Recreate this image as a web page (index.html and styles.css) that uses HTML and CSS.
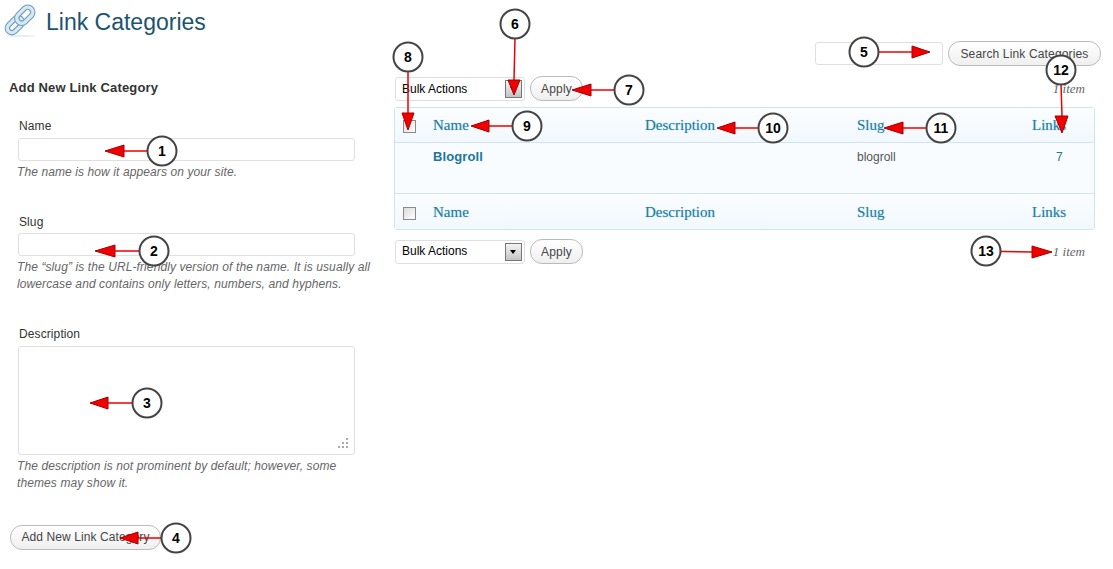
FILE: index.html
```html
<!DOCTYPE html>
<html lang="en">
<head>
    <meta charset="UTF-8">
    <meta name="viewport" content="width=device-width, initial-scale=1.0">
    <title>Link Categories</title>
    <link rel="stylesheet" href="styles.css">
</head>
<body>
    <div class="wrap">
        <div class="page-title">
            <svg class="title-icon" width="34" height="34" viewBox="0 0 34 34">
                <ellipse cx="18" cy="33" rx="15" ry="1" fill="#e3eff5"/>
                <g fill="none" transform="rotate(-45 17 17)">
                    <rect x="1" y="12.500" width="17.500" height="9" rx="4.500" stroke="#6d9fbb" stroke-width="5.500"/>
                    <rect x="1" y="12.500" width="17.500" height="9" rx="4.500" stroke="#d8e8f1" stroke-width="3.300"/>
                    <rect x="14.500" y="12" width="18.500" height="10" rx="5" stroke="#6d9fbb" stroke-width="5.500"/>
                    <rect x="14.500" y="12" width="18.500" height="10" rx="5" stroke="#d8e8f1" stroke-width="3.300"/>
                </g>
            </svg>
            <h1>Link Categories</h1>
        </div>

        <div class="columns">
            <form class="col-left">
                <h3>Add New Link Category</h3>
                <div class="field field-name">
                    <label>Name</label>
                    <input type="text" class="text-input">
                    <p>The name is how it appears on your site.</p>
                </div>
                <div class="field field-slug">
                    <label>Slug</label>
                    <input type="text" class="text-input">
                    <p>The “slug” is the URL-friendly version of the name. It is usually all lowercase and contains only letters, numbers, and hyphens.</p>
                </div>
                <div class="field field-desc">
                    <label>Description</label>
                    <div class="text-area">
                        <svg class="grip" width="11" height="11" viewBox="0 0 11 11" fill="#a9a9a9">
                            <rect x="8" y="0" width="2" height="2"/>
                            <rect x="4" y="4" width="2" height="2"/>
                            <rect x="8" y="4" width="2" height="2"/>
                            <rect x="0" y="8" width="2" height="2"/>
                            <rect x="4" y="8" width="2" height="2"/>
                            <rect x="8" y="8" width="2" height="2"/>
                        </svg>
                    </div>
                    <p>The description is not prominent by default; however, some themes may show it.</p>
                </div>
                <button type="button" class="btn btn-add">Add New Link Category</button>
            </form>

            <div class="col-right">
                <div class="search-row">
                    <input type="text" class="text-input search-input">
                    <button type="button" class="btn btn-search">Search Link Categories</button>
                </div>
                <div class="tablenav tablenav-top">
                    <div class="select-box">Bulk Actions<span class="select-arrow"></span></div>
                    <button type="button" class="btn btn-apply">Apply</button>
                    <span class="count">1 item</span>
                </div>
                <table class="cat-table">
                    <thead>
                        <tr>
                            <th class="check-col"><span class="check"></span></th>
                            <th class="name-col">Name</th>
                            <th class="desc-col">Description</th>
                            <th class="slug-col">Slug</th>
                            <th>Links</th>
                        </tr>
                    </thead>
                    <tbody>
                        <tr>
                            <td></td>
                            <td class="cat-name">Blogroll</td>
                            <td></td>
                            <td class="cat-slug">blogroll</td>
                            <td class="cat-links">7</td>
                        </tr>
                    </tbody>
                    <tfoot>
                        <tr>
                            <th class="check-col"><span class="check"></span></th>
                            <th>Name</th>
                            <th>Description</th>
                            <th>Slug</th>
                            <th>Links</th>
                        </tr>
                    </tfoot>
                </table>
                <div class="tablenav tablenav-bottom">
                    <div class="select-box">Bulk Actions<span class="select-arrow"></span></div>
                    <button type="button" class="btn btn-apply">Apply</button>
                    <span class="count">1 item</span>
                </div>
            </div>
        </div>
    </div>

    <!-- numbered callouts drawn over the screen -->
    <svg class="callouts" width="1113" height="569" viewBox="0 0 1113 569">
        <g class="arrows">
            <path d="M147 151H124M148 251H115M133 403H108M162 538H138M878 52H912M515 38L514 80M615 90H591M408 71V113M513 126H489M759 128H735M927 128H903M1061 84L1062 116M972 251L1032 252"/>
            <polygon points="105,151 124,145 124,157"/>
            <polygon points="95,251 115,245 115,257"/>
            <polygon points="90,403 108,397 108,409"/>
            <polygon points="120,538 138,532 138,544"/>
            <polygon points="930,52 912,46 912,58"/>
            <polygon points="514,95 508,80 520,80"/>
            <polygon points="572,90 591,84 591,96"/>
            <polygon points="408,130 402,113 414,113"/>
            <polygon points="471,126 489,120 489,132"/>
            <polygon points="717,128 735,122 735,134"/>
            <polygon points="884,128 903,122 903,134"/>
            <polygon points="1062,133 1055,116 1068,116"/>
            <polygon points="1052,252 1032,246 1032,258"/>
        </g>
        <g class="dots">
            <circle cx="162" cy="151" r="14.500"/>
            <circle cx="154" cy="251" r="14.500"/>
            <circle cx="147" cy="403" r="14.500"/>
            <circle cx="176" cy="538" r="14.500"/>
            <circle cx="864" cy="52" r="14.500"/>
            <circle cx="515" cy="24" r="14.500"/>
            <circle cx="629" cy="90" r="14.500"/>
            <circle cx="408" cy="57" r="14.500"/>
            <circle cx="527" cy="126" r="14.500"/>
            <circle cx="773" cy="128" r="14.500"/>
            <circle cx="941" cy="128" r="14.500"/>
            <circle cx="1061" cy="70" r="14.500"/>
            <circle cx="986" cy="251" r="14.500"/>
        </g>
        <g class="nums">
            <text x="162" y="156">1</text>
            <text x="154" y="256">2</text>
            <text x="147" y="408">3</text>
            <text x="176" y="543">4</text>
            <text x="864" y="57">5</text>
            <text x="515" y="29">6</text>
            <text x="629" y="95">7</text>
            <text x="408" y="62">8</text>
            <text x="527" y="131">9</text>
            <text x="773" y="133">10</text>
            <text x="941" y="133">11</text>
            <text x="1061" y="75">12</text>
            <text x="986" y="256">13</text>
        </g>
    </svg>
</body>
</html>
```

FILE: styles.css
```css
html, body {
    margin: 0;
    padding: 0;
    height: 569px;
    overflow: hidden;
    background-color: #ffffff;
}

body {
    font-family: 'Liberation Sans', Arial, sans-serif;
    font-size: 12px;
    color: #333333;
    position: relative;
}

.page-title {
    display: flex;
    align-items: flex-start;
    height: 41px;
    padding-left: 3px;
}

.title-icon {
    margin-top: 3px;
    margin-right: 9px;
}

h1 {
    margin: 8px 0 0;
    font-size: 23px;
    line-height: 28px;
    font-weight: normal;
    color: #1c5470;
}

.columns {
    display: flex;
    padding-left: 9px;
}

/* left form */
.col-left {
    width: 361px;
    margin-right: 24px;
}

h3 {
    margin: 39px 0 0;
    font-size: 13px;
    line-height: 16px;
    font-weight: bold;
    letter-spacing: 0.15px;
    color: #333333;
}

.field {
    padding-left: 9px;
    width: 337px;
}

.field-name {
    margin-top: 23px;
}

.field-slug {
    margin-top: 33px;
}

.field-desc {
    margin-top: 33px;
}

label {
    display: block;
    padding-left: 1px;
    font-size: 12px;
    line-height: 14px;
    height: 19px;
    letter-spacing: 0.1px;
    color: #333333;
}

.field-slug label,
.field-desc label {
    line-height: 16px;
}

.field-desc label {
    height: 20px;
}

.field p {
    width: 356px;
    margin: 3px 0 0 -1px;
    font-size: 12px;
    line-height: 17px;
    font-style: italic;
    letter-spacing: 0.1px;
    color: #666666;
}

.text-input {
    display: block;
    box-sizing: border-box;
    width: 337px;
    height: 23px;
    margin: 0;
    padding: 0 4px;
    background-color: #ffffff;
    border: 1px solid #dfdfdf;
    border-radius: 3px;
}

.text-area {
    position: relative;
    box-sizing: border-box;
    width: 337px;
    height: 109px;
    background-color: #ffffff;
    border: 1px solid #dfdfdf;
    border-radius: 3px;
}

.grip {
    position: absolute;
    right: 5px;
    bottom: 5px;
}

.btn {
    display: block;
    box-sizing: border-box;
    margin: 0;
    padding: 0;
    height: 25px;
    font-family: 'Liberation Sans', Arial, sans-serif;
    font-size: 12px;
    letter-spacing: 0.15px;
    color: #464646;
    background: linear-gradient(to bottom, #ffffff, #efefef);
    border: 1px solid #bbbbbb;
    border-radius: 12px;
}

.btn-add {
    width: 151px;
    margin-top: 33px;
    margin-left: 1px;
    padding-bottom: 2px;
    letter-spacing: 0.1px;
}

/* right side */
.col-right {
    width: 707px;
}

.search-row {
    display: flex;
    align-items: center;
    height: 25px;
}

.search-input {
    width: 128px;
    margin-left: 421px;
    margin-right: 5px;
}

.btn-search {
    width: 153px;
}

.tablenav {
    display: flex;
    align-items: center;
    width: 690px;
    padding-left: 1px;
}

.tablenav-top {
    margin-top: 10px;
}

.tablenav-bottom {
    margin-top: 9px;
}

.select-box {
    position: relative;
    box-sizing: border-box;
    width: 130px;
    height: 24px;
    margin-right: 5px;
    padding-left: 6px;
    font-size: 12px;
    line-height: 22px;
    color: #000000;
    background-color: #ffffff;
    border: 1px solid #dfdfdf;
    border-radius: 3px;
}

.tablenav-bottom .select-box {
    line-height: 20px;
}

.select-arrow {
    position: absolute;
    top: 2px;
    right: 2px;
    box-sizing: border-box;
    width: 17px;
    height: 18px;
    background: linear-gradient(to bottom, #f4f4f4, #c4c4c4);
    border: 1px solid #777777;
}

.select-arrow::after {
    content: '';
    position: absolute;
    top: 6px;
    left: 4px;
    border-style: solid;
    border-width: 4px 3.500px 0;
    border-color: #000000 transparent transparent;
}

.btn-apply {
    width: 53px;
}

.count {
    margin-left: auto;
    font-family: 'Liberation Serif', Georgia, serif;
    font-size: 13px;
    font-style: italic;
    color: #666666;
}

.cat-table {
    width: 701px;
    margin-top: 6px;
    table-layout: fixed;
    border-collapse: separate;
    border-spacing: 0;
    background-color: #f8fcfe;
    border: 1px solid #d1e5ee;
    border-radius: 3px;
}

.cat-table th {
    height: 35px;
    padding: 1px 0 0;
    box-sizing: border-box;
    font-family: 'Liberation Serif', Georgia, serif;
    font-size: 15px;
    font-weight: normal;
    text-align: left;
    text-shadow: 0 0 1px rgba(33, 130, 165, 0.45);
    color: #1f7fa6;
    background: linear-gradient(to bottom, #fbfdfe, #f1f8fd);
}

.cat-table thead th {
    border-bottom: 1px solid #d1e5ee;
}

.cat-table tfoot th {
    height: 36px;
    border-top: 1px solid #d1e5ee;
}

.check-col {
    width: 38px;
}

.name-col,
.desc-col {
    width: 212px;
}

.slug-col {
    width: 175px;
}

.check {
    display: block;
    box-sizing: border-box;
    width: 13px;
    height: 13px;
    margin-left: 8px;
    margin-top: 2px;
    background: linear-gradient(135deg, #dcdcdc, #ffffff);
    border: 1px solid #8a8a8a;
}

.cat-table td {
    height: 50px;
    padding: 6px 0 0;
    box-sizing: border-box;
    vertical-align: top;
    font-size: 12px;
    line-height: 17px;
}

.cat-table .cat-name {
    padding-top: 5px;
    font-size: 13px;
    font-weight: bold;
    letter-spacing: 0.1px;
    color: #21759b;
}

.cat-slug {
    color: #555555;
}

.cat-table .cat-links {
    padding-left: 24px;
    color: #21759b;
}

/* callouts */
.callouts {
    position: absolute;
    top: 0;
    left: 0;
}

.arrows path {
    fill: none;
    stroke: #f00000;
    stroke-width: 1.500;
}

.arrows polygon {
    fill: #f00000;
    stroke: #a80000;
    stroke-width: 1;
}

.dots circle {
    fill: #ffffff;
    stroke: #444444;
    stroke-width: 2;
}

.nums text {
    font-family: 'Liberation Sans', Arial, sans-serif;
    font-size: 14px;
    font-weight: bold;
    text-anchor: middle;
    fill: #000000;
}
```
